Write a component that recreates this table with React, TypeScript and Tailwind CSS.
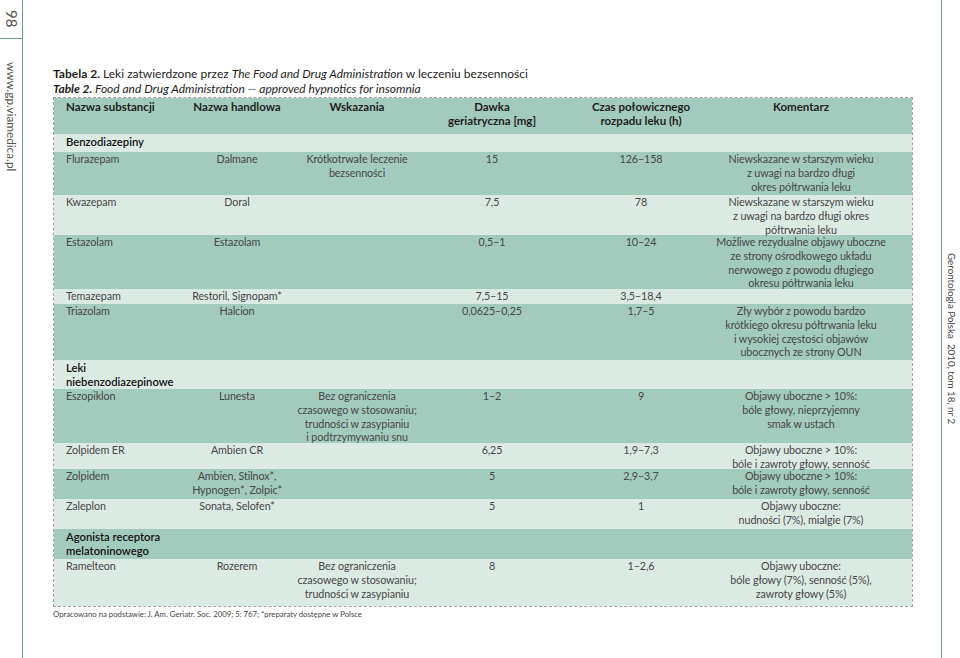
type Row =
  | { kind: "section"; label: string[]; h: string; dark: boolean }
  | { kind: "drug"; cells: string[][]; h: string; dark: boolean };

const rows: Row[] = [
  { kind: "section", label: ["Benzodiazepiny"], h: "h-[18px]", dark: false },
  {
    kind: "drug",
    h: "h-[43px]",
    dark: true,
    cells: [
      ["Flurazepam"],
      ["Dalmane"],
      ["Krótkotrwałe leczenie", "bezsenności"],
      ["15"],
      ["126–158"],
      ["Niewskazane w starszym wieku", "z uwagi na bardzo długi", "okres półtrwania leku"],
    ],
  },
  {
    kind: "drug",
    h: "h-[40px]",
    dark: false,
    cells: [
      ["Kwazepam"],
      ["Doral"],
      [],
      ["7,5"],
      ["78"],
      ["Niewskazane w starszym wieku", "z uwagi na bardzo długi okres", "półtrwania leku"],
    ],
  },
  {
    kind: "drug",
    h: "h-[54px]",
    dark: true,
    cells: [
      ["Estazolam"],
      ["Estazolam"],
      [],
      ["0,5–1"],
      ["10–24"],
      [
        "Możliwe rezydualne objawy uboczne",
        "ze strony ośrodkowego układu",
        "nerwowego z powodu długiego",
        "okresu półtrwania leku",
      ],
    ],
  },
  {
    kind: "drug",
    h: "h-[15px]",
    dark: false,
    cells: [["Temazepam"], ["Restoril, Signopam*"], [], ["7,5–15"], ["3,5–18,4"], []],
  },
  {
    kind: "drug",
    h: "h-[56px]",
    dark: true,
    cells: [
      ["Triazolam"],
      ["Halcion"],
      [],
      ["0,0625–0,25"],
      ["1,7–5"],
      [
        "Zły wybór z powodu bardzo",
        "krótkiego okresu półtrwania leku",
        "i wysokiej częstości objawów",
        "ubocznych ze strony OUN",
      ],
    ],
  },
  { kind: "section", label: ["Leki", "niebenzodiazepinowe"], h: "h-[29px]", dark: false },
  {
    kind: "drug",
    h: "h-[54px]",
    dark: true,
    cells: [
      ["Eszopiklon"],
      ["Lunesta"],
      ["Bez ograniczenia", "czasowego w stosowaniu;", "trudności w zasypianiu", "i podtrzymywaniu snu"],
      ["1–2"],
      ["9"],
      ["Objawy uboczne > 10%:", "bóle głowy, nieprzyjemny", "smak w ustach"],
    ],
  },
  {
    kind: "drug",
    h: "h-[26px]",
    dark: false,
    cells: [
      ["Zolpidem ER"],
      ["Ambien CR"],
      [],
      ["6,25"],
      ["1,9–7,3"],
      ["Objawy uboczne > 10%:", "bóle i zawroty głowy, senność"],
    ],
  },
  {
    kind: "drug",
    h: "h-[30px]",
    dark: true,
    cells: [
      ["Zolpidem"],
      ["Ambien, Stilnox*,", "Hypnogen*, Zolpic*"],
      [],
      ["5"],
      ["2,9–3,7"],
      ["Objawy uboczne > 10%:", "bóle i zawroty głowy, senność"],
    ],
  },
  {
    kind: "drug",
    h: "h-[30px]",
    dark: false,
    cells: [
      ["Zaleplon"],
      ["Sonata, Selofen*"],
      [],
      ["5"],
      ["1"],
      ["Objawy uboczne:", "nudności (7%), mialgie (7%)"],
    ],
  },
  { kind: "section", label: ["Agonista receptora", "melatoninowego"], h: "h-[30px]", dark: true },
  {
    kind: "drug",
    h: "h-[47px]",
    dark: false,
    cells: [
      ["Ramelteon"],
      ["Rozerem"],
      ["Bez ograniczenia", "czasowego w stosowaniu;", "trudności w zasypianiu"],
      ["8"],
      ["1–2,6"],
      ["Objawy uboczne:", "bóle głowy (7%), senność (5%),", "zawroty głowy (5%)"],
    ],
  },
];

const cols = "grid grid-cols-[127px_112px_128px_142px_156px_164px]";

const Lines = ({ lines, left }: { lines: string[]; left?: boolean }) => (
  <div className={left ? "flex flex-col items-start pl-3" : "flex flex-col items-center"}>
    {lines.map((l, i) => (
      <span key={i} className="whitespace-nowrap">
        {l}
      </span>
    ))}
  </div>
);

export default function App() {
  return (
    <div
      className="flex h-[658px] w-[960px] bg-white text-[#474747]"
      style={{ fontFamily: 'Lato, "Liberation Sans", Arial, sans-serif' }}
    >
      {/* left margin */}
      <div className="flex w-[23px] shrink-0 flex-col border-r border-[#6a9f92]">
        <div className="flex h-[39px] items-center justify-center border-b border-[#6a9f92]">
          <span className="text-[15px] leading-none text-[#555] [writing-mode:vertical-rl]">98</span>
        </div>
        <div className="flex justify-center pt-[23px]">
          <span className="text-[11.8px] leading-none text-[#555] [writing-mode:vertical-rl]">
            www.gp.viamedica.pl
          </span>
        </div>
      </div>

      {/* page */}
      <div className="flex-1 pl-[30px] pt-[66px]">
        <div className="text-[12px] leading-[15px] text-[#1e1e1e]">
          <p>
            <b>Tabela 2.</b> Leki zatwierdzone przez <i>The Food and Drug Administration</i> w leczeniu bezsenności
          </p>
          <p className="italic">
            <b>Table 2.</b> Food and Drug Administration — approved hypnotics for insomnia
          </p>
        </div>

        <div className="mt-[1px] w-[860px] border border-dashed border-[#a3a3a3] text-[10.75px] leading-[13.8px] tracking-[-0.1px]">
          <div className={`${cols} h-[36px] bg-[#a3cbbd] pt-[2px] text-[11.5px] leading-[14px] font-bold tracking-normal text-[#1e1e1e]`}>
            <Lines left lines={["Nazwa substancji"]} />
            <Lines lines={["Nazwa handlowa"]} />
            <Lines lines={["Wskazania"]} />
            <Lines lines={["Dawka", "geriatryczna [mg]"]} />
            <Lines lines={["Czas połowicznego", "rozpadu leku (h)"]} />
            <Lines lines={["Komentarz"]} />
          </div>

          {rows.map((r, i) => {
            const bg = r.dark ? "bg-[#a3cbbd]" : "bg-[#dceae4]";
            if (r.kind === "section") {
              return (
                <div key={i} className={`${r.h} ${bg} pt-[1px] text-[11.25px] font-semibold tracking-normal text-[#111]`}>
                  <Lines left lines={r.label} />
                </div>
              );
            }
            return (
              <div key={i} className={`${cols} ${r.h} ${bg}`}>
                {r.cells.map((c, j) => (
                  <Lines key={j} left={j === 0} lines={c} />
                ))}
              </div>
            );
          })}
        </div>

        <p className="mt-[2px] text-[7.75px] leading-[10px] text-[#444]">
          Opracowano na podstawie: J. Am. Geriatr. Soc. 2009; 5: 767; *preparaty dostępne w Polsce
        </p>
      </div>

      {/* right margin */}
      <div className="flex w-[19px] shrink-0 justify-center border-l border-[#6a9f92] pt-[253px]">
        <span className="whitespace-nowrap text-[9.8px] leading-none text-[#444] [writing-mode:vertical-rl]">
          Gerontologia Polska&nbsp;&nbsp;2010, tom 18, nr 2
        </span>
      </div>
    </div>
  );
}
